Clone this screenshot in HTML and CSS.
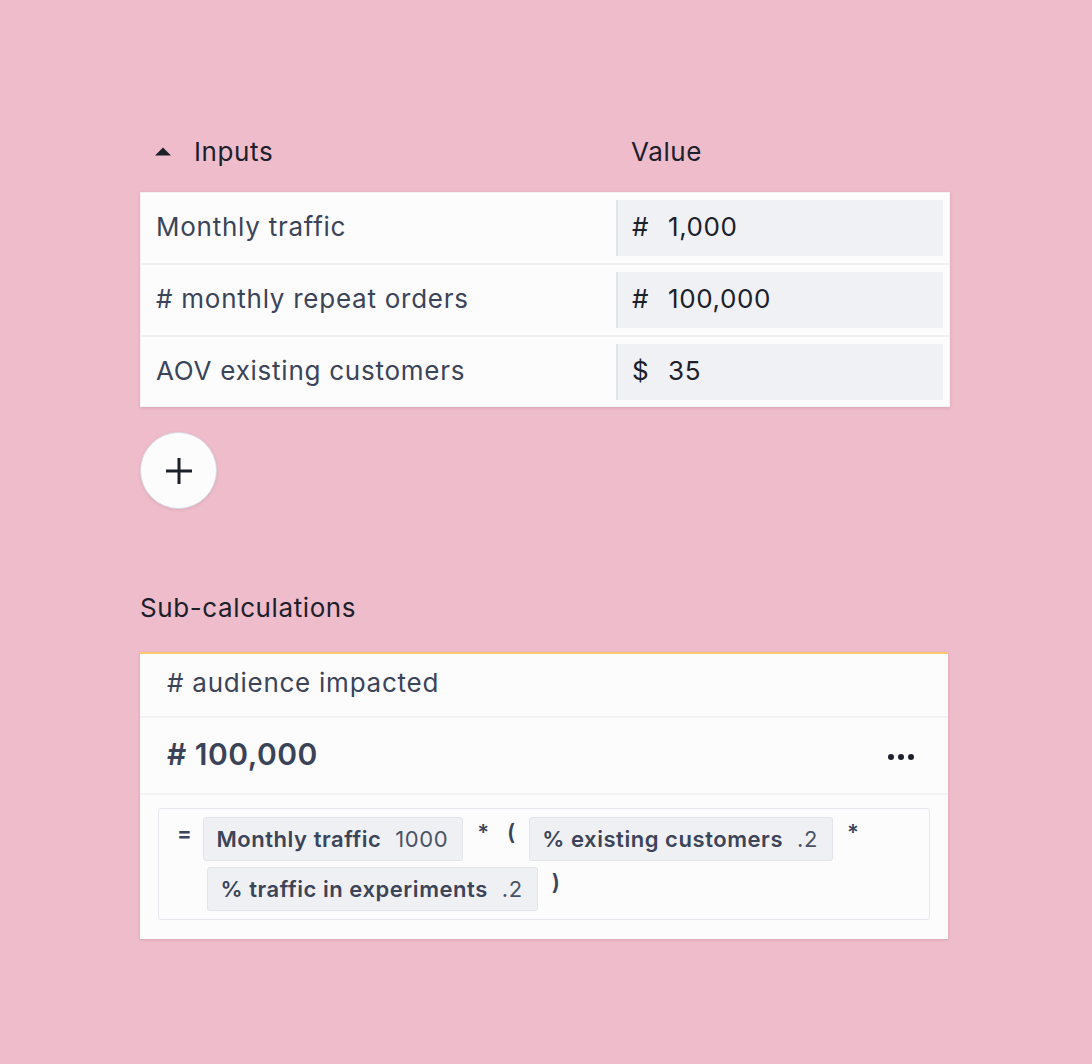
FILE: index.html
```html
<!DOCTYPE html>
<html>
<head>
<meta charset="utf-8">
<link rel="stylesheet" href="styles.css">
</head>
<body>
<main class="page">
  <header class="inputs-head">
    <div class="head-left">
      <svg class="caret" width="16" height="9" viewBox="0 0 16 9"><path d="M0 8.5 L8 0.5 L16 8.5 Z" fill="#1c202b"/></svg>
      <span>Inputs</span>
    </div>
    <div class="head-right">Value</div>
  </header>

  <section class="table">
    <div class="row">
      <div class="label">Monthly traffic</div>
      <div class="cell"><span class="sym">#</span><span>1,000</span></div>
    </div>
    <div class="row">
      <div class="label"># monthly repeat orders</div>
      <div class="cell"><span class="sym">#</span><span>100,000</span></div>
    </div>
    <div class="row">
      <div class="label">AOV existing customers</div>
      <div class="cell"><span class="sym">$</span><span>35</span></div>
    </div>
  </section>

  <button class="add">
    <svg width="28" height="28" viewBox="0 0 28 28"><path d="M14 1 V27 M1 14 H27" stroke="#1c202b" stroke-width="3" fill="none"/></svg>
  </button>

  <h2 class="sub-title">Sub-calculations</h2>

  <section class="card">
    <div class="card-head"># audience impacted</div>
    <div class="card-value">
      <span class="big"># 100,000</span>
      <span class="dots"><i></i><i></i><i></i></span>
    </div>
    <div class="formula-wrap">
      <div class="formula">
        <span class="op eq">=</span>
        <div class="terms">
          <span class="chip"><b>Monthly traffic</b><span class="v">1000</span></span>
          <span class="op">*</span>
          <span class="op paren">(</span>
          <span class="chip"><b>% existing customers</b><span class="v">.2</span></span>
          <span class="op">*</span>
          <span class="chip chip-wrap"><b>% traffic in experiments</b><span class="v">.2</span></span>
          <span class="op">)</span>
        </div>
      </div>
    </div>
  </section>
</main>
</body>
</html>
```

FILE: styles.css
```css
* { box-sizing: border-box; }
html, body { margin: 0; padding: 0; }
body {
  background: #efbccb;
  font-family: Inter, "Noto Sans", "Liberation Sans", sans-serif;
  color: #1c202b;
  width: 1092px;
  height: 1064px;
  overflow: hidden;
}
.page {
  width: 810px;
  margin-left: 140px;
  padding-top: 136px;
}
.inputs-head {
  display: grid;
  grid-template-columns: 476px 1fr;
  height: 32px;
  line-height: 32px;
  font-size: 26px;
  letter-spacing: 0.6px;
  margin-bottom: 24px;
  color: #1c202b;
}
.head-left { display: flex; align-items: center; padding-left: 15px; }
.caret { margin-right: 23px; margin-top: -2px; }
.head-right { padding-left: 15px; }

.table {
  background: #fcfcfd;
  border: 1px solid #f3f2f5;
  box-shadow: 0 1px 3px rgba(120, 60, 80, 0.18);
}
.row {
  display: grid;
  grid-template-columns: 1fr 327px;
  align-items: center;
  padding: 7px 6px 7px 15px;
  border-bottom: 2px solid #eff0f4;
}
.row:last-child { border-bottom: 0; padding-bottom: 6px; }
.label {
  font-size: 26px;
  letter-spacing: 0.75px;
  color: #3b4459;
  margin-top: -3px;
}
.cell {
  height: 56px;
  background: #eff1f5;
  border-left: 2px solid #e1e4eb;
  display: flex;
  align-items: center;
  padding-left: 14px;
  font-size: 26px;
  letter-spacing: 0.6px;
  color: #1c202b;
}
.cell span:last-child { margin-top: -3px; }
.sym { width: 36px; margin-top: -3px; }

.add {
  margin-top: 25px;
  width: 77px;
  height: 77px;
  border-radius: 50%;
  background: #fcfcfd;
  border: 1.5px solid #d8dce3;
  box-shadow: 0 1px 3px rgba(120, 60, 80, 0.15);
  display: flex;
  align-items: center;
  justify-content: center;
  padding: 0;
}

.sub-title {
  margin: 83px 0 0 0;
  height: 32px;
  line-height: 32px;
  font-size: 26px;
  letter-spacing: 0.6px;
  font-weight: 400;
  color: #1c202b;
}

.card {
  margin-top: 28px;
  width: 808px;
  background: #fcfcfc;
  border-top: 2px solid #ffc86a;
  box-shadow: 0 1px 3px rgba(120, 60, 80, 0.18);
  padding-bottom: 19px;
}
.card-head {
  height: 64px;
  display: flex;
  align-items: center;
  padding: 0 0 5px 27px;
  font-size: 26px;
  letter-spacing: 0.75px;
  color: #3b4459;
  border-bottom: 2px solid #f2f2f4;
}
.card-value {
  height: 77px;
  display: flex;
  align-items: center;
  justify-content: space-between;
  padding: 0 34px 0 27px;
  border-bottom: 2px solid #f2f2f4;
}
.big {
  font-size: 30px;
  letter-spacing: 0.5px;
  font-weight: 600;
  color: #3a4357;
  margin-top: -4px;
}
.dots { display: flex; gap: 4px; margin-top: 2px; }
.dots i {
  display: block;
  width: 6px;
  height: 6px;
  border-radius: 50%;
  background: #1c202b;
}
.formula-wrap { padding: 13px 18px 0 18px; }
.formula {
  border: 1px solid #e6e8ed;
  border-radius: 3px;
  background: #fcfcfd;
  padding: 8px 10px 8px 18px;
  display: flex;
  align-items: flex-start;
}
.terms {
  display: flex;
  flex-wrap: wrap;
  align-items: flex-start;
  column-gap: 10px;
  row-gap: 6px;
}
.op {
  font-size: 22px;
  font-weight: 600;
  color: #3b4459;
  line-height: 30px;
  padding: 0 4px;
}
.eq { width: 38px; padding: 0; line-height: 32px; }
.chip {
  height: 44px;
  display: flex;
  align-items: center;
  gap: 14px;
  padding: 0 14px 0 12px;
  background: #eff0f4;
  border: 1px solid #e2e4ea;
  border-radius: 3px;
  font-size: 22px;
  letter-spacing: 0.55px;
  color: #3b4459;
}
.chip b { font-weight: 600; }
.chip .v { font-weight: 400; color: #4a5366; }
.chip-wrap { margin-left: 4px; }
```
